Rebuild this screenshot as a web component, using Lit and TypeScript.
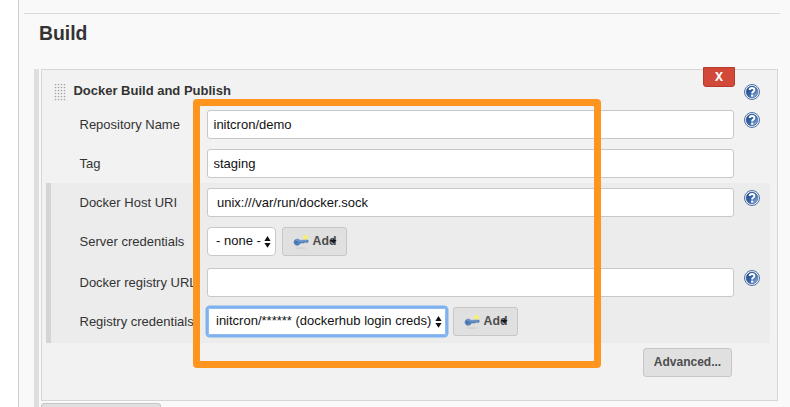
import { LitElement, html, css, svg } from "lit";
import { customElement, property } from "lit/decorators.js";

@customElement("help-icon")
class HelpIcon extends LitElement {
  static styles = css`
    :host { display: block; width: 16px; height: 16px; }
    svg { display: block; }
  `;
  render() {
    return html`<svg width="16" height="16" viewBox="0 0 16 16">
      <defs><linearGradient id="g" x1="0.1" y1="0.1" x2="1" y2="1">
        <stop offset="0" stop-color="#204a87"></stop><stop offset=".5" stop-color="#3b68a8"></stop><stop offset="1" stop-color="#b4cae6"></stop>
      </linearGradient></defs>
      <circle cx="8" cy="8" r="7.5" fill="#fff" stroke="#3c619b" stroke-width=".9"></circle>
      <circle cx="8" cy="8" r="5.9" fill="url(#g)" stroke="#2f5797" stroke-width=".6"></circle>
      <path d="M5.7 6.1C5.7 3.2 10.4 3.2 10.4 5.9C10.4 7.6 8.1 7.6 8.1 9.6" fill="none" stroke="#fff" stroke-width="2"></path>
      <rect x="7.1" y="10.6" width="2.1" height="2" fill="#fff"></rect>
    </svg>`;
  }
}

@customElement("add-button")
class AddButton extends LitElement {
  static styles = css`
    :host { display: block; flex: none; width: 65px; height: 29px; }
    .btn { box-sizing: border-box; width: 65px; height: 29px; display: flex; align-items: center; padding-left: 10px;
      border: 1px solid #c6c6c6; border-radius: 3px; background: #e0e0e0; color: #4d4d4d;
      font: bold 12px/27px "Liberation Sans", Arial, sans-serif; }
    .key { flex: none; width: 16px; height: 16px; margin-right: 3.5px; }
    .word { flex: none; font-size: 12.3px; }
    .arrow { flex: none; width: 8px; height: 6px; margin-left: -7px; margin-top: -1px; }
  `;
  render() {
    return html`<div class="btn">
      <svg class="key" viewBox="0 0 16 16">
        <ellipse cx="8" cy="14" rx="5.5" ry=".8" fill="#d0d0c8"></ellipse>
        <circle cx="12.5" cy="3.4" r="2.2" fill="#f4ee68"></circle>
        <path d="M12.5 .7v5.4M9.8 3.4h5.4" stroke="#fbf26e" stroke-width="1"></path>
        <path d="M1 8.2C1 4.7 5.3 4.4 7 6.4L14.8 6L15.4 7.2L14.6 8.6H13.4L12.2 8.1L11.3 9H7.4C6.2 12.4 1 11.9 1 8.2Z" fill="#5181bd" stroke="#4772aa" stroke-width=".5"></path>
        <path d="M3.5 6.4C5 5.8 6 7.2 7.2 7.2L14 6.9" fill="none" stroke="#86aad6" stroke-width=".7"></path>
        <circle cx="3.1" cy="8.5" r=".8" fill="#315b91"></circle>
      </svg><span class="word">Add</span>
      <svg class="arrow" viewBox="0 0 8 6"><path d="M.8 1.9H7.6L4.3 5.6Z" fill="#111"></path><path d="M4.3 .6V4" stroke="#222" stroke-width="1.2"></path></svg>
    </div>`;
  }
}

@customElement("select-box")
class SelectBox extends LitElement {
  static styles = css`
    :host { display: block; flex: none; }
    .box { box-sizing: border-box; height: 29px; display: flex; align-items: center; justify-content: space-between;
      padding: 0 4px 0 8px; border: 1px solid #c8c8c8; border-radius: 4px; background: #fff; color: #111;
      font: 13px/26px "Liberation Sans", Arial, sans-serif; white-space: pre; }
    .focus { border-color: #7eb1ee; border-radius: 3px; box-shadow: 0 0 0 1.5px #7eb1ee, inset 0 0 0 1px #8fbcf2; }
    .text { display: block; height: 27px; }
    svg { flex: none; width: 7px; height: 12px; }
  `;
  @property() text = "";
  @property({ type: Boolean }) focused = false;
  render() {
    return html`<div class="box ${this.focused ? "focus" : ""}"><span class="text">${this.text}</span>
      <svg viewBox="0 0 7 12"><path d="M.4 4.9L3.5 .1L6.6 4.9ZM.4 6.9L3.5 11.7L6.6 6.9Z" fill="#111"></path></svg></div>`;
  }
}

@customElement("app-root")
class AppRoot extends LitElement {
  static styles = css`
    :host { display: block; position: relative; box-sizing: border-box; width: 790px; height: 407px; overflow: hidden;
      padding-left: 18px; background: #fff; font: 13px/16px "Liberation Sans", Arial, sans-serif; color: #333; }
    .page { box-sizing: border-box; height: 407px; border-left: 1px solid #ccc; background: #f9f9f9; padding: 13px 10px 0 5px; }
    .rule { height: 1px; width: 756px; background: #d9d9d9; }
    h2 { margin: 7px 0 0 15px; font-size: 19.4px; line-height: 24px; height: 48px; }
    .work { display: flex; gap: 2px; margin-left: 10px; }
    .strip { width: 5px; height: 338px; background: #dedede; }
    .main { width: 737px; }
    .panel { box-sizing: border-box; height: 332px; border: 1px solid #d6d6d6; background: #f2f2f2; padding-left: 4px; }
    .head { display: flex; height: 35px; }
    .grip { width: 12px; height: 18px; margin: 13px 0 0 8px; }
    .title { width: 629.6px; margin: 13px 0 0 7.4px; font-weight: bold; white-space: nowrap; }
    .close { box-sizing: border-box; width: 32px; height: 20px; margin: -3px 9px 0 0; flex: none; background: #d24939; border: 1px solid #b83a2c;
      border-radius: 0 0 3px 3px; color: #fff; font: bold 12px/18px "Noto Sans", sans-serif; text-align: center; }
    .head help-icon { margin-top: 14px; }
    .row { display: grid; grid-template-columns: 127.5px 527px 16px; height: 39px; padding: 5px 0 0 33.5px; box-sizing: border-box; }
    .tall { height: 41px; }
    .label { line-height: 30px; white-space: nowrap; }
    .input { box-sizing: border-box; height: 29px; border: 1px solid #c8c8c8; border-radius: 3px; background: #fff; padding-left: 5.5px; line-height: 27px; color: #111; white-space: pre; }
    .indent { padding-left: 9px; }
    .row help-icon { margin: 2px 0 0 10px; }
    .controls { display: flex; gap: 6px; }
    .none { width: 69px; }
    .creds { width: 240px; }
    .nested { box-sizing: border-box; width: 724px; height: 160px; background: #ececec; border-left: 5px solid #d4d4d4; }
    .nested .row { padding-left: 28.5px; }
    .advanced { box-sizing: border-box; width: 89px; height: 29px; margin: 5px 0 0 597px; border: 1px solid #c6c6c6; border-radius: 3px;
      background: #e0e0e0; color: #4d4d4d; font-weight: bold; font-size: 12px; line-height: 26px; text-align: center; }
    .more { box-sizing: border-box; width: 120px; height: 29px; margin-top: 2px; border: 1px solid #c6c6c6; border-radius: 3px; background: #e0e0e0; }
    .highlight { position: absolute; box-sizing: border-box; left: 193px; top: 99px; width: 408px; height: 269px;
      border: 7px solid #ff941f; border-radius: 4px; }
  `;
  render() {
    const dots = [0, 1, 2, 3].flatMap(c => [0, 1, 2, 3, 4, 5].map(r =>
      svg`<rect x=${c * 3 + 0.7} y=${r * 3 + 0.8} width="1.6" height="1.5" fill="#a6a6a6"></rect>`));
    return html`
      <div class="page">
        <div class="rule"></div>
        <h2>Build</h2>
        <div class="work">
          <div class="strip"></div>
          <div class="main">
            <div class="panel">
              <div class="head">
                <svg class="grip" viewBox="0 0 12 18"><rect width="12" height="18" fill="#fafafa"></rect>${dots}</svg>
                <div class="title">Docker Build and Publish</div>
                <div class="close">X</div>
                <help-icon></help-icon>
              </div>
              <div class="row"><div class="label">Repository Name</div><div class="input">initcron/demo</div><help-icon></help-icon></div>
              <div class="row"><div class="label">Tag</div><div class="input">staging</div></div>
              <div class="nested">
                <div class="row"><div class="label">Docker Host URI</div><div class="input indent">unix:///var/run/docker.sock</div><help-icon></help-icon></div>
                <div class="row tall"><div class="label">Server credentials</div>
                  <div class="controls"><select-box class="none" text="- none -"></select-box><add-button></add-button></div></div>
                <div class="row"><div class="label">Docker registry URL</div><div class="input"></div><help-icon></help-icon></div>
                <div class="row tall"><div class="label">Registry credentials</div>
                  <div class="controls"><select-box class="creds" focused text="initcron/****** (dockerhub login creds)"></select-box><add-button></add-button></div></div>
              </div>
              <div class="advanced">Advanced...</div>
            </div>
            <div class="more"></div>
          </div>
        </div>
      </div>
      <div class="highlight"></div>`;
  }
}
